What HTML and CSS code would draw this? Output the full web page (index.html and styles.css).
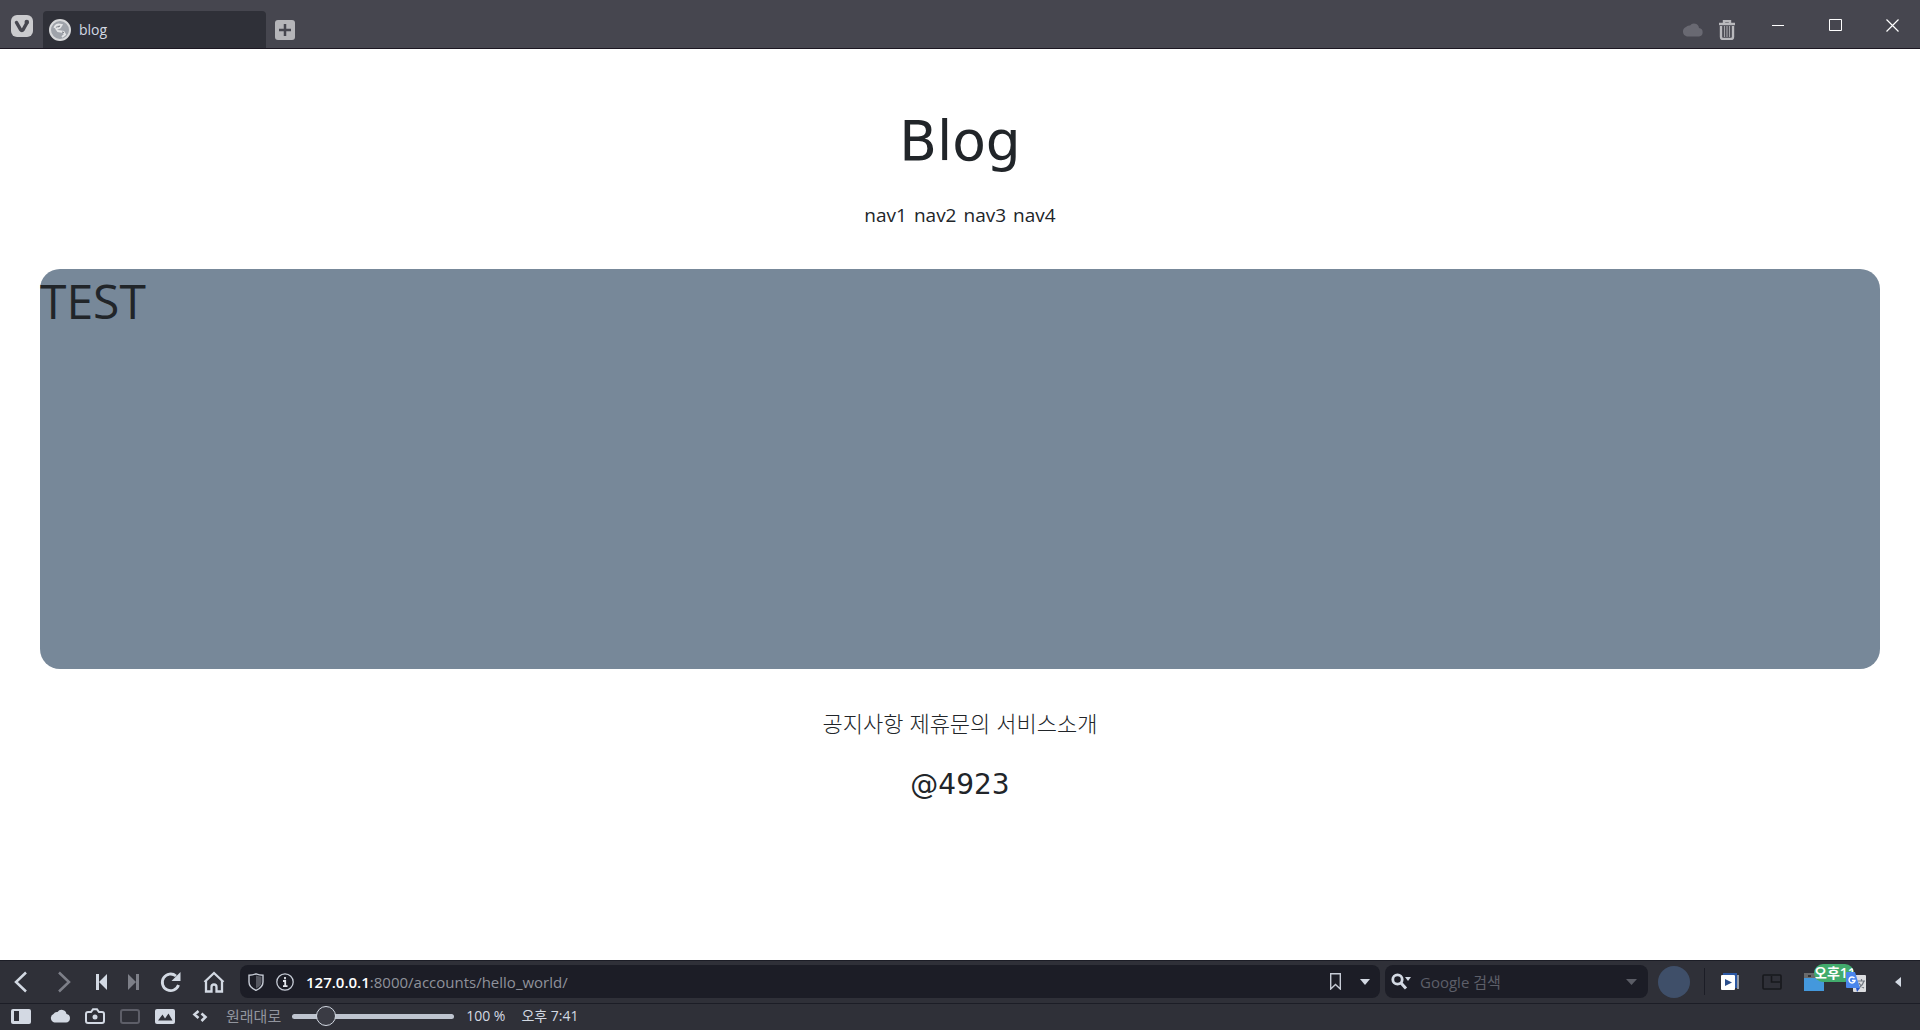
FILE: index.html
```html
<!DOCTYPE html>
<html lang="ko">
<head>
<meta charset="utf-8">
<meta name="viewport" content="width=device-width, initial-scale=1">
<title>blog</title>
<link rel="stylesheet" href="styles.css">
</head>
<body>
<header class="tabbar">
  <button class="icon-btn vivaldi" type="button" aria-label="Vivaldi">
    <svg width="24" height="24" viewBox="0 0 24 24"><rect x="1" y="1" width="22" height="22" rx="6" fill="#cbcbce"/><path d="M6.500 8.500l4 7q1.400 2 2.700 0l3.600-6.500" fill="none" stroke="#46464f" stroke-width="3.500" stroke-linecap="round" stroke-linejoin="round"/><circle cx="16.800" cy="8" r="2.300" fill="#46464f"/></svg>
  </button>
  <button class="tab" type="button">
    <svg width="22" height="22" viewBox="0 0 22 22"><circle cx="11" cy="11" r="10" fill="#9fa3aa" stroke="#d7d8da" stroke-width="2"/><path d="M5.500 9q.500-3 4-3.500l3 .500-1.500 2.500-3.500 1.500 1.500 2 5.500 1 1.500 2.500-3 2.500" fill="none" stroke="#e4e5e7" stroke-width="2"/><path d="M9 8l2-1M13 13l2 .500" stroke="#74777e"/></svg>
    <span>blog</span>
  </button>
  <button class="icon-btn new-tab" type="button" aria-label="New tab">
    <svg width="20" height="20" viewBox="0 0 20 20"><rect width="20" height="20" rx="3" fill="#b5b5b9"/><path d="M10 4v12M4 10h12" stroke="#46464f" stroke-width="2.500"/></svg>
  </button>
  <div class="tab-tools">
    <button class="icon-btn" type="button" aria-label="Sync">
      <svg width="22" height="14" viewBox="0 0 22 14"><path d="M6 13.500a5 5 0 0 1-1-9.500 4 4 0 0 1 4-1.500A5 5 0 0 1 18 5a4.300 4.300 0 0 1 0 8.500z" fill="#696972"/></svg>
    </button>
    <button class="icon-btn" type="button" aria-label="Closed tabs">
      <svg width="18" height="20" viewBox="0 0 18 20"><path d="M6 3V1h6v2M1 4h16" fill="none" stroke="#b9b9bd" stroke-width="2.400"/><path d="M3 6v11q0 2 2 2h8q2 0 2-2V6" fill="none" stroke="#b9b9bd" stroke-width="2.400"/><path d="M6.500 6v11M9 6v11M11.500 6v11" stroke="#a2a2a7" stroke-width="1.200"/></svg>
    </button>
  </div>
  <div class="window-buttons">
    <button type="button" aria-label="Minimize"><svg width="13" height="13" viewBox="0 0 13 13"><path d="M0 6.500h12" stroke="#fff"/></svg></button>
    <button type="button" aria-label="Maximize"><svg width="13" height="13" viewBox="0 0 13 13"><path d="M.5.500h12v11H.5z" fill="none" stroke="#fff"/></svg></button>
    <button type="button" aria-label="Close"><svg width="13" height="13" viewBox="0 0 13 13"><path d="M.5.500l12 12M12.500.500l-12 12" stroke="#fff" stroke-width="1.200"/></svg></button>
  </div>
</header>

<main class="page">
  <h1 class="title">Blog</h1>
  <nav class="nav">
    <a href="#nav1">nav1</a>
    <a href="#nav2">nav2</a>
    <a href="#nav3">nav3</a>
    <a href="#nav4">nav4</a>
  </nav>
  <section class="card"><p>TEST</p></section>
  <nav class="links">
    <a href="#notice">공지사항</a>
    <a href="#partner">제휴문의</a>
    <a href="#about">서비스소개</a>
  </nav>
  <p class="handle">@4923</p>
</main>

<footer class="browser-bottom">
  <div class="toolbar">
    <div class="history">
      <button class="icon-btn" type="button" aria-label="Back"><svg width="22" height="22" viewBox="0 0 22 22"><path d="M16 1.500L6 11l10 9.500" fill="none" stroke="#d3d9e3" stroke-width="2.500"/></svg></button>
      <button class="icon-btn" type="button" aria-label="Forward"><svg width="22" height="22" viewBox="0 0 22 22"><path d="M6 1.500L16 11 6 20.500" fill="none" stroke="#7d7f88" stroke-width="2.500"/></svg></button>
      <div class="skip">
        <button class="icon-btn" type="button" aria-label="Rewind"><svg width="12" height="16" viewBox="0 0 12 16"><path d="M0 0h3v16H0zM11 0v16L3 8z" fill="#d3d9e3"/></svg></button>
        <button class="icon-btn" type="button" aria-label="Fast forward"><svg width="12" height="16" viewBox="0 0 12 16"><path d="M8 0h3v16H8zM0 0v16l8-8z" fill="#7d7f88"/></svg></button>
      </div>
      <button class="icon-btn" type="button" aria-label="Reload"><svg width="22" height="22" viewBox="0 0 22 22"><path d="M18.500 14A8.300 8.300 0 1 1 16 5" fill="none" stroke="#d3d9e3" stroke-width="2.800"/><path d="M20.500 1v9h-9z" fill="#d3d9e3"/></svg></button>
      <button class="icon-btn" type="button" aria-label="Home"><svg width="22" height="22" viewBox="0 0 22 22"><path d="M1.500 11L11 2l9.500 9M3 10v10.500h5.500V16a2.500 2.500 0 0 1 5 0v4.500H19V10" fill="none" stroke="#d3d9e3" stroke-width="2.300"/></svg></button>
    </div>
    <div class="field address">
      <button class="icon-btn" type="button" aria-label="Content blocker"><svg width="16" height="18" viewBox="0 0 16 18"><path d="M8 .800q3.500 1.400 7 1.500V9q0 5.500-7 8.300Q1 14.500 1 9V2.300Q4.500 2.200 8 .800z" fill="#1c1d26" stroke="#c6cbd5" stroke-width="1.400"/><path d="M8 2.500q3 1 5.500 1.200V9Q13.500 13 8 15.500z" fill="#555760"/></svg></button>
      <button class="icon-btn" type="button" aria-label="Site info"><svg width="18" height="18" viewBox="0 0 18 18"><circle cx="9" cy="9" r="8.200" fill="none" stroke="#c6cbd5" stroke-width="1.300"/><path d="M9 4v2.200M7 8h2.200v5M7 13.200h4.500" fill="none" stroke="#e3e6ec" stroke-width="1.800"/></svg></button>
      <div class="url"><label for="address">127.0.0.1</label><input id="address" type="text" value=":8000/accounts/hello_world/"></div>
      <button class="icon-btn" type="button" aria-label="Bookmark"><svg width="11" height="17" viewBox="0 0 11 17"><path d="M.700.700h9.600v15.300L5.500 11.500.700 16z" fill="none" stroke="#c6cbd5" stroke-width="1.400"/></svg></button>
      <button class="icon-btn drop" type="button" aria-label="Address history"><svg width="10" height="6" viewBox="0 0 10 6"><path d="M0 0h10L5 6z" fill="#d3d9e3"/></svg></button>
    </div>
    <div class="field search">
      <button class="icon-btn" type="button" aria-label="Search engine"><svg width="20" height="17" viewBox="0 0 20 17"><circle cx="6.500" cy="6.500" r="4.700" fill="none" stroke="#d3d9e3" stroke-width="2.800"/><path d="M10 10l5 5.500" stroke="#d3d9e3" stroke-width="3"/><path d="M14 4h6l-3 4z" fill="#d3d9e3"/></svg></button>
      <input type="search" aria-label="Google 검색" placeholder="Google 검색">
      <button class="icon-btn" type="button" aria-label="Search history"><svg width="11" height="6" viewBox="0 0 11 6"><path d="M0 0h11L5.500 6z" fill="#5b5d66"/></svg></button>
    </div>
    <button class="avatar" type="button" aria-label="Profile"></button>
    <div class="extensions">
      <button class="icon-btn" type="button" aria-label="Video queue"><svg width="20" height="18" viewBox="0 0 20 18"><path d="M3 1h13v14" fill="none" stroke="#2b57a3" stroke-width="2"/><path d="M18 2v14" stroke="#b9bec7" stroke-width="1.500"/><rect x="1" y="2" width="14" height="15" rx="1" fill="#fff"/><path d="M5 6l7 3.500L5 13z" fill="#2b4f8d"/></svg></button>
      <button class="icon-btn" type="button" aria-label="Picture in picture"><svg width="20" height="16" viewBox="0 0 20 16"><rect x="1" y="1" width="18" height="14" rx="1" fill="none" stroke="#17181c" stroke-width="1.600"/><path d="M9.500 2v6H18" fill="none" stroke="#17181c" stroke-width="1.600"/></svg></button>
      <button class="icon-btn clock" type="button"><svg width="20" height="18" viewBox="0 0 20 18"><path d="M0 0h20v6H0z" fill="#696a6c"/><path d="M4 3h3" stroke="#333" stroke-width="2"/><path d="M0 5h20v13H0z" fill="#4498dc"/></svg><span class="badge">오후11</span></button>
      <button class="icon-btn translate" type="button" aria-label="Google Translate"><svg width="20" height="20" viewBox="0 0 20 20"><rect x="7" y="3" width="13" height="17" rx="1" fill="#dcdde0"/><path d="M12 9h7M15.500 7v2M18 9q-1 4-5 7M13 11q2 4 5 5" fill="none" stroke="#737982" stroke-width="1.200"/><path d="M0 1q0-1 1-1h8l5 16H1q-1 0-1-1z" fill="#4a86ec"/><path d="M10 16h4l-3 4z" fill="#2a56c6"/><path d="M8.500 6.200A3 3 0 1 0 9 8.500H6" fill="none" stroke="#fff" stroke-width="1.400"/></svg></button>
      <button class="icon-btn" type="button" aria-label="Toggle extensions"><svg width="6" height="10" viewBox="0 0 6 10"><path d="M6 0v10L0 5z" fill="#d3d9e3"/></svg></button>
    </div>
  </div>
  <div class="statusbar">
    <div class="status-icons">
      <button class="icon-btn panel" type="button" aria-label="Panel"><svg width="20" height="16" viewBox="0 0 20 16"><rect y="1" width="20" height="15" rx="2" fill="#d3d9e3"/><path d="M3 3h5v10H3z" fill="#2f3038"/></svg></button>
      <button class="icon-btn" type="button" aria-label="Sync status"><svg width="20" height="14" viewBox="1 0 20 14"><path d="M5.500 13.500a4.500 4.500 0 0 1-1-8.500 4 4 0 0 1 4-2A5 5 0 0 1 17.500 5a4.300 4.300 0 0 1-.500 8.500z" fill="#d3d9e3"/></svg></button>
      <button class="icon-btn" type="button" aria-label="Capture"><svg width="20" height="16" viewBox="0 0 20 16"><path d="M3 4h3l2-2.700h4L14 4h3q2 0 2 2v7q0 2-2 2H3q-2 0-2-2V6q0-2 2-2z" fill="none" stroke="#d3d9e3" stroke-width="2"/><circle cx="10" cy="9" r="2.500" fill="#d3d9e3"/></svg></button>
      <button class="icon-btn" type="button" aria-label="Tiling"><svg width="20" height="16" viewBox="0 0 20 16"><rect x="1" y="2" width="18" height="13" rx="2" fill="none" stroke="#5d5e68" stroke-width="2"/></svg></button>
      <button class="icon-btn" type="button" aria-label="Images"><svg width="20" height="16" viewBox="0 0 20 16"><rect y="1" width="20" height="15" rx="2" fill="#d3d9e3"/><path d="M3 12.500l4.500-6 2.500 4 3.500-5 4 7z" fill="#2f3038"/></svg></button>
      <button class="icon-btn" type="button" aria-label="Page actions"><svg width="20" height="12" viewBox="0 0 20 12"><path d="M8.500 1l-4 3.500 4 3.500M11.500 3.500l4 3.500-4 4" fill="none" stroke="#d3d9e3" stroke-width="2.600"/></svg></button>
    </div>
    <button class="reset" type="button">원래대로</button>
    <input class="zoom" type="range" min="20" max="500" value="100" aria-label="Zoom">
    <span class="percent">100 %</span>
    <time datetime="19:41">오후 7:41</time>
  </div>
</footer>
</body>
</html>
```
FILE: styles.css
```css
* { box-sizing: border-box; }

body {
  margin: 0;
  min-height: 100vh;
  display: flex;
  flex-direction: column;
  background: #fff;
  color: #212529;
  font-family: "Open Sans", "Noto Sans CJK KR", sans-serif;
  font-size: 14px;
}

button, input { font: inherit; }
button { padding: 0; border: 0; background: none; color: inherit; }
svg { display: block; flex: none; }
a { color: inherit; text-decoration: none; }
h1, p { margin: 0; font-weight: 400; }

.icon-btn { display: flex; align-items: center; justify-content: center; flex: none; }

/* Tab bar */
.tabbar {
  display: flex;
  align-items: flex-end;
  height: 49px;
  padding-left: 10px;
  background: #46464f;
  border-bottom: 1px solid #1c1722;
}
.vivaldi { margin: 0 9px 10px 0; }
.tab {
  display: flex;
  align-items: center;
  gap: 8px;
  width: 223px;
  height: 37px;
  padding-left: 6px;
  border-radius: 4px 4px 0 0;
  background: #2f3038;
  color: #d3d9e3;
  line-height: 20px;
}
.new-tab { margin: 0 auto 8px 9px; }
.tab-tools { display: flex; align-items: center; gap: 15px; padding: 0 14px 8px 0; }
.window-buttons { display: flex; align-self: stretch; }
.window-buttons button { display: flex; align-items: center; justify-content: center; width: 57px; padding: 2px 0 0 1px; }
.window-buttons { margin-left: -1px; }

/* Blog page */
.page {
  flex: 1;
  display: flex;
  flex-direction: column;
  align-items: center;
  padding: 60px 40px 0;
}
.title { font-family: "DejaVu Sans", sans-serif; font-size: 55px; line-height: 64px; }
.nav { display: flex; gap: 7px; margin-top: 28px; font-size: 19px; line-height: 28px; }
.card {
  align-self: stretch;
  min-height: 400px;
  margin-top: 40px;
  border-radius: 20px;
  background: #778899;
}
.card p { font-size: 48px; line-height: 64px; }
.links {
  display: flex;
  gap: 6px;
  margin-top: 38px;
  font-family: "Noto Sans CJK KR", sans-serif;
  font-size: 22px;
  font-weight: 300;
  line-height: 30px;
}
.handle { margin-top: 32px; font-family: "DejaVu Sans", sans-serif; font-size: 28px; line-height: 32px; }

/* Address toolbar */
.browser-bottom { background: #2f3038; border-top: 1px solid #1c1d26; }
.toolbar { display: flex; align-items: center; height: 43px; padding: 0 19px 1px 10px; border-bottom: 1px solid #1c1d26; }
.history { display: flex; align-items: center; gap: 21px; margin-right: 15px; }
.skip { display: flex; gap: 20px; margin-right: -1px; }
.field { display: flex; align-items: center; height: 33px; border-radius: 8px; background: #1c1d26; }
.field input { min-width: 0; flex: 1; padding: 0; border: 0; outline: 0; background: none; color: #8f929b; line-height: 22px; }
.address { flex: 1; gap: 12px; padding: 0 10px 0 8px; font-size: 15px; }
.url { display: flex; flex: 1; align-items: center; color: #fff; }
.url label { font-weight: 600; line-height: 22px; }
.drop { margin-left: 7px; }
.search { width: 263px; gap: 9px; margin-left: 5px; padding: 0 11px 0 6px; font-size: 15px; }
.search input::placeholder { color: #5d5f69; opacity: 1; }
.avatar { width: 32px; height: 32px; margin: 0 14px 0 10px; border-radius: 50%; background: #3f4f69; }
.extensions { display: flex; align-items: center; gap: 22px; padding-left: 15px; }
.extensions::before { content: ""; width: 1px; height: 27px; margin: 0 -7px 0 -15px; background: #1c1d26; }
.translate { position: relative; margin-right: 7px; }
.clock { position: relative; }
.badge {
  position: absolute;
  left: 10px;
  top: -9px;
  height: 18px;
  width: 40px;
  overflow: hidden;
  border-radius: 9px;
  background: #42ab6d;
  color: #fff;
  font-size: 14px;
  font-weight: 600;
  line-height: 18px;
  white-space: nowrap;
}

/* Status bar */
.statusbar { display: flex; align-items: center; height: 26px; padding: 0 11px 2px; color: #d3d9e3; line-height: 18px; }
.status-icons { display: flex; align-items: center; gap: 15px; margin-right: 16px; }
.panel { margin-right: 4px; }
.reset { font-size: 15px; color: #92959e; line-height: 18px; }
.zoom { appearance: none; width: 162px; height: 20px; margin: 0 12px 0 11px; background: none; }
.zoom::-webkit-slider-runnable-track { height: 5px; border-radius: 3px; background: #bec4cf; }
.zoom::-webkit-slider-thumb { appearance: none; width: 20px; height: 20px; margin-top: -8px; border: 1px solid #d3d9e3; border-radius: 50%; background: #3a3b44; }
.percent { margin-right: 16px; }
```
